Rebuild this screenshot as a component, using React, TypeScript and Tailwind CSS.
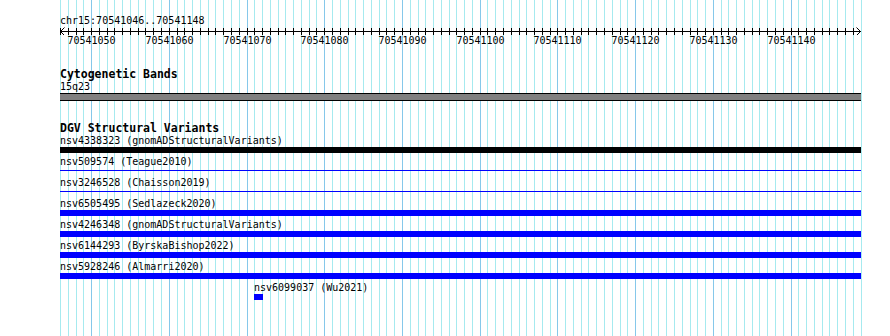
import React from "react";

const X0 = 60;
const PX = 7.772;
const START = 70541046;
const COUNT = 104;

const lines = Array.from({ length: COUNT }, (_, i) => ({
  x: Math.round(X0 + i * PX),
  major: (START + i) % 10 === 0,
  bp: START + i,
}));

const majors = lines.filter((l) => l.major && l.bp <= 70541140);

type Row = { id: string; src: string; kind: "black" | "thick" | "thin" };
const rows: Row[] = [
  { id: "nsv4338323", src: "gnomADStructuralVariants", kind: "black" },
  { id: "nsv509574", src: "Teague2010", kind: "thin" },
  { id: "nsv3246528", src: "Chaisson2019", kind: "thin" },
  { id: "nsv6505495", src: "Sedlazeck2020", kind: "thick" },
  { id: "nsv4246348", src: "gnomADStructuralVariants", kind: "thick" },
  { id: "nsv6144293", src: "ByrskaBishop2022", kind: "thick" },
  { id: "nsv5928246", src: "Almarri2020", kind: "thick" },
];

const mono = "font-['DejaVu_Sans_Mono','Liberation_Mono',monospace]";

function Grid() {
  return (
    <svg
      className="absolute left-0 top-0"
      width={890}
      height={336}
      shapeRendering="crispEdges"
    >
      {lines.map((l) => (
        <rect
          key={l.bp}
          x={l.x}
          y={0}
          width={1}
          height={336}
          fill={l.major ? "#86c8ea" : "#a6eaef"}
        />
      ))}
    </svg>
  );
}

function Ruler() {
  return (
    <svg width={801} height={9} className="block" shapeRendering="crispEdges">
      <rect x={0} y={5} width={801} height={1} fill="#000" />
      {lines.map((l) => (
        <rect key={l.bp} x={l.x - X0} y={2} width={1} height={7} fill="#000" />
      ))}
      <path d="M4.5 1.5 L0.5 5.5 L4.5 9.5" stroke="#000" fill="none" shapeRendering="auto" />
      <path d="M796.5 1.5 L800.5 5.5 L796.5 9.5" stroke="#000" fill="none" shapeRendering="auto" />
    </svg>
  );
}

export default function App() {
  return (
    <div className={`relative w-[890px] h-[336px] bg-white overflow-hidden text-black ${mono}`}>
      <Grid />
      <div className="relative ml-[60px] w-[801px]">
        {/* ruler */}
        <div className="pt-[15px] text-[10px] leading-[12px]">chr15:70541046..70541148</div>
        <div className="-mt-px">
          <Ruler />
        </div>
        <div className="relative h-[12px] text-[10px] leading-[12px]">
          {majors.map((m) => (
            <span
              key={m.bp}
              className="absolute top-0 -translate-x-1/2 whitespace-nowrap"
              style={{ left: m.x - X0 + 0.5 }}
            >
              {m.bp}
            </span>
          ))}
        </div>

        {/* cytogenetic bands */}
        <div className="mt-[21px] text-[11.5px] leading-[13px] font-bold">Cytogenetic Bands</div>
        <div className="text-[10px] leading-[12px]">15q23</div>
        <div className="h-[8px] border-y border-black bg-[#808080]" />

        {/* DGV */}
        <div className="mt-[21px] h-[12px] text-[11.5px] leading-[13px] font-bold">DGV Structural Variants</div>
        <div className="flex flex-col">
          {rows.map((r) => (
            <div key={r.id} className="flex flex-col h-[21px]">
              <div className="h-[13px] text-[10px] leading-[14px] whitespace-nowrap">
                {r.id} ({r.src})
              </div>
              {r.kind === "thin" ? (
                <div className="mt-[2px] h-px bg-[#0000ff]" />
              ) : (
                <div
                  className={`h-[6px] ${r.kind === "black" ? "bg-black" : "bg-[#0000ff]"}`}
                />
              )}
            </div>
          ))}
          <div className="flex flex-col ml-[194px]">
            <div className="h-[13px] text-[10px] leading-[14px] whitespace-nowrap">nsv6099037 (Wu2021)</div>
            <div className="h-[6px] w-[9px] bg-[#0000ff]" />
          </div>
        </div>
      </div>
    </div>
  );
}
